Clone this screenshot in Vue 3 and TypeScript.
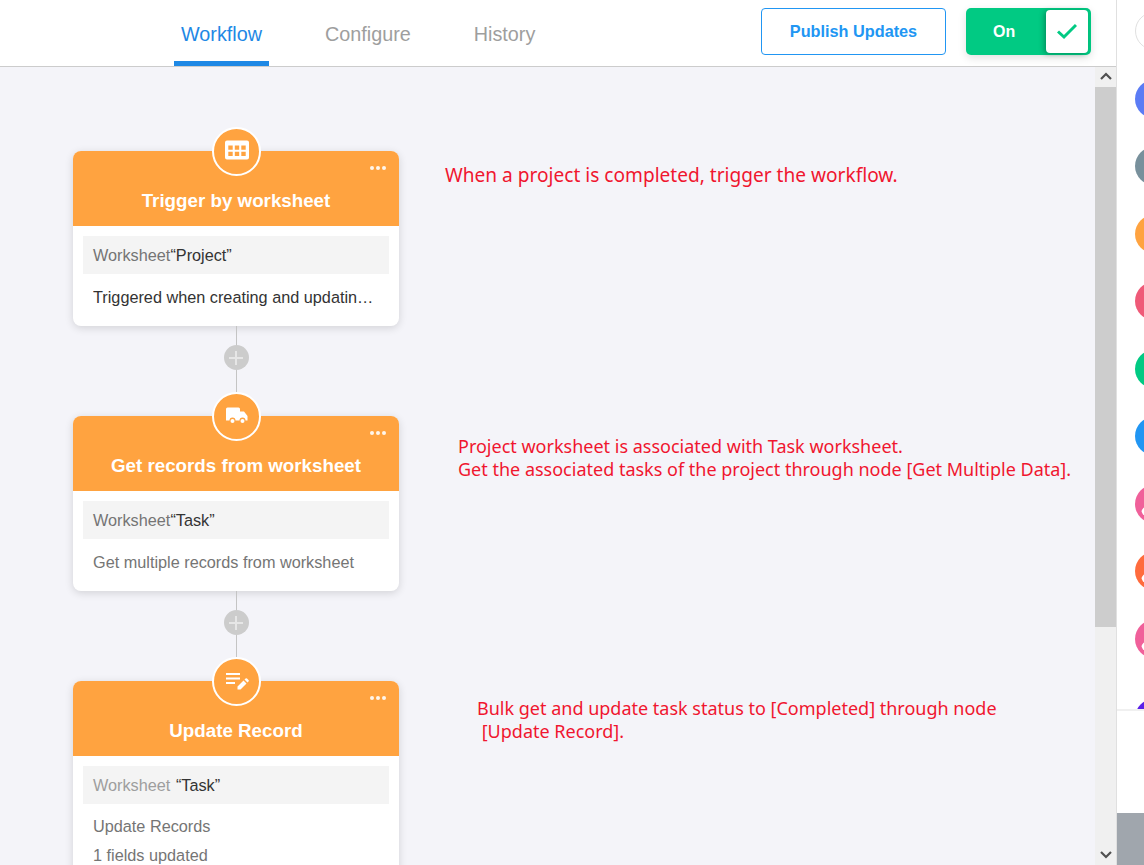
<script setup lang="ts">
interface FlowNode {
  title: string
  icon: 'table' | 'truck' | 'edit'
  label: string
  labelMuted?: boolean
  target: string
  lines: string[]
  dark?: boolean
  notes: string[]
  noteClass: string
}

const nodes: FlowNode[] = [
  {
    title: 'Trigger by worksheet',
    icon: 'table',
    label: 'Worksheet',
    target: '“Project”',
    lines: ['Triggered when creating and updating records'],
    dark: true,
    notes: ['When a project is completed, trigger the workflow.'],
    noteClass: 'note--first',
  },
  {
    title: 'Get records from worksheet',
    icon: 'truck',
    label: 'Worksheet',
    target: '“Task”',
    lines: ['Get multiple records from worksheet'],
    notes: [
      'Project worksheet is associated with Task worksheet.',
      'Get the associated tasks of the project through node [Get Multiple Data].',
    ],
    noteClass: 'note--second',
  },
  {
    title: 'Update Record',
    icon: 'edit',
    label: 'Worksheet ',
    labelMuted: true,
    target: '“Task”',
    lines: ['Update Records', '1 fields updated'],
    notes: [
      'Bulk get and update task status to [Completed] through node',
      '\u00a0[Update Record].',
    ],
    noteClass: 'note--third',
  },
]

const tabs = ['Workflow', 'Configure', 'History']
const apps = [
  { color: '#5b7cf5' },
  { color: '#78909c' },
  { color: '#ffa340' },
  { color: '#ef5a78' },
  { color: '#01ca83' },
  { color: '#2196f3' },
  { color: '#f0609a', glyph: true },
  { color: '#ff6b3d', glyph: true },
  { color: '#f0609a', glyph: true },
  { color: '#5a1fe8' },
]
</script>

<template>
  <div class="page">
    <main class="main">
      <header class="topbar">
        <nav class="tabs">
          <a
            v-for="(tab, idx) in tabs"
            :key="tab"
            class="tab"
            :class="{ 'tab--active': idx === 0 }"
          >{{ tab }}</a>
        </nav>
        <div class="actions">
          <button type="button" class="publish">Publish Updates</button>
          <div class="toggle">
            <span class="toggle-label">On</span>
            <span class="toggle-knob">
              <svg width="20" height="20" viewBox="0 0 20 20">
                <path d="M1 9.500l6 5.500L19 3" fill="none" stroke="#01ca83" stroke-width="3" />
              </svg>
            </span>
          </div>
        </div>
      </header>

      <div class="content">
        <div class="canvas">
          <template v-for="(node, idx) in nodes" :key="node.title">
            <section class="row">
              <article class="card">
                <div class="card-head">
                  <span class="badge">
                    <svg v-if="node.icon === 'table'" width="24" height="24" viewBox="0 2 24 24">
                      <path
                        fill="#fff"
                        fill-rule="evenodd"
                        d="M2 2.500h20A2 2 0 0 1 24 4.500v15a2 2 0 0 1-2 2H2a2 2 0 0 1-2-2v-15a2 2 0 0 1 2-2zM3.300 7.500v4.200h4.400V7.500zm6.500 0v4.200h4.400V7.500zm6.500 0v4.200h4.400V7.500zM3.300 13.800V18h4.400v-4.200zm6.500 0V18h4.400v-4.200zm6.500 0V18h4.400v-4.200z"
                      />
                    </svg>
                    <svg v-else-if="node.icon === 'truck'" width="24" height="24" viewBox="0 1.500 24 24">
                      <path
                        fill="#fff"
                        d="M2.500 4h11A1.500 1.500 0 0 1 15 5.500V8h4l3.500 4.500V17h-2a3 3 0 0 0-6 0h-4a3 3 0 0 0-6 0H1V5.500A1.500 1.500 0 0 1 2.500 4z"
                      />
                      <circle cx="7.500" cy="17.500" r="2" fill="#fff" />
                      <circle cx="17.500" cy="17.500" r="2" fill="#fff" />
                    </svg>
                    <svg v-else width="24" height="24" viewBox="0 0 24 24">
                      <path fill="#fff" d="M1 3h14v2H1zM1 7.500h14v2H1zM1 12h9v2H1z" />
                      <path fill="#fff" d="M12.500 16.500v3h3l6-6-3-3zM19.500 9.500l3 3 1-1a1 1 0 0 0 0-1.400L22 8.500a1 1 0 0 0-1.400 0z" />
                    </svg>
                  </span>
                  <span class="more"><i></i><i></i><i></i></span>
                  <h2 class="card-title">{{ node.title }}</h2>
                </div>
                <div class="card-body">
                  <div class="source">
                    <span :class="node.labelMuted ? 'source-label--muted' : 'source-label'">{{ node.label }}</span><span v-if="node.labelMuted" class="source-gap"></span><span class="source-target">{{ node.target }}</span>
                  </div>
                  <div class="desc" :class="{ 'desc--dark': node.dark, 'desc--tight': node.lines.length > 1 }">
                    <p v-for="line in node.lines" :key="line" class="desc-line">{{ line }}</p>
                  </div>
                </div>
              </article>
              <div class="note" :class="node.noteClass">
                <p v-for="line in node.notes" :key="line" class="note-line">{{ line }}</p>
              </div>
            </section>
            <div v-if="idx < nodes.length - 1" class="connector">
              <span class="add">
                <svg width="14" height="14" viewBox="0 0 14 14">
                  <path d="M7 0v14M0 7h14" stroke="#e6e6e6" stroke-width="2" />
                </svg>
              </span>
            </div>
          </template>
        </div>

        <div class="scrollbar">
          <span class="scroll-btn scroll-btn--up">
            <svg width="12" height="8" viewBox="0 0 12 8">
              <path d="M1 7l5-5 5 5" fill="none" stroke="#505050" stroke-width="2.200" />
            </svg>
          </span>
          <span class="scroll-thumb"></span>
          <span class="scroll-track"></span>
          <span class="scroll-btn">
            <svg width="12" height="8" viewBox="0 0 12 8">
              <path d="M1 1l5 5 5-5" fill="none" stroke="#505050" stroke-width="2.200" />
            </svg>
          </span>
        </div>
      </div>
    </main>

    <aside class="side">
      <div class="side-list">
        <span class="search"></span>
        <span
          v-for="(app, idx) in apps"
          :key="idx"
          class="app"
          :style="{ background: app.color }"
        >
          <i v-if="app.glyph" class="app-glyph"></i>
        </span>
      </div>
      <div class="side-blank"></div>
      <div class="side-foot"></div>
    </aside>
  </div>
</template>

<style>
html,
body {
  margin: 0;
  overflow: hidden;
}
</style>

<style scoped>
.page {
  display: flex;
  width: 1144px;
  height: 865px;
  overflow: hidden;
  background: #fff;
  font-family: 'Liberation Sans', Arial, sans-serif;
}

.main {
  display: flex;
  flex-direction: column;
  flex: 0 0 1116px;
  height: 100%;
}

.topbar {
  display: flex;
  flex: 0 0 67px;
  box-sizing: border-box;
  justify-content: space-between;
  background: #fff;
  border-bottom: 1px solid #ccc;
}

.tabs {
  display: flex;
  gap: 49px;
  padding-left: 174px;
}

.tab {
  box-sizing: border-box;
  height: 66px;
  padding: 23px 7px 0;
  border-bottom: 5px solid transparent;
  color: #9e9e9e;
  font-size: 19.800px;
  line-height: 23px;
}

.tab--active {
  color: #1e88e5;
  border-bottom-color: #1e88e5;
}

.actions {
  display: flex;
  gap: 20px;
  padding: 8px 25px 0 0;
}

.publish {
  box-sizing: border-box;
  width: 185px;
  height: 47px;
  border: 1px solid #2196f3;
  border-radius: 4px;
  background: #fff;
  color: #2196f3;
  font-family: inherit;
  font-size: 16.250px;
  font-weight: 700;
}

.toggle {
  display: flex;
  box-sizing: border-box;
  justify-content: space-between;
  width: 125px;
  height: 47px;
  padding: 2px 3px 2px 0;
  border-radius: 5px;
  background: #01ca83;
  box-shadow: 0 3px 8px rgba(0, 0, 0, 0.12);
}

.toggle-label {
  padding-left: 27px;
  color: #fff;
  font-size: 16px;
  font-weight: 700;
  line-height: 43px;
}

.toggle-knob {
  display: flex;
  align-items: center;
  justify-content: center;
  width: 42px;
  height: 43px;
  border-radius: 4px;
  background: #fff;
  box-shadow: -2px 1px 5px rgba(0, 80, 50, 0.45);
}

.content {
  display: flex;
  flex: 1;
  min-height: 0;
}

.canvas {
  flex: 1;
  min-width: 0;
  padding: 84px 0 0 73px;
  overflow: hidden;
  background: #f4f4f9;
}

.row {
  display: flex;
  align-items: flex-start;
}

.card {
  flex: 0 0 326px;
  width: 326px;
  min-width: 0;
  border-radius: 8px;
  background: #fff;
  box-shadow: 0 2px 8px rgba(0, 0, 0, 0.14);
}

.card-head {
  position: relative;
  box-sizing: border-box;
  height: 75px;
  padding-top: 37px;
  border-radius: 8px 8px 0 0;
  background: #ffa340;
}

.badge {
  position: absolute;
  top: -24px;
  left: 139px;
  display: flex;
  box-sizing: border-box;
  align-items: center;
  justify-content: center;
  width: 49px;
  height: 49px;
  border: 2px solid #fff;
  border-radius: 50%;
  background: #ffa340;
}

.more {
  position: absolute;
  top: 15px;
  right: 13px;
  display: flex;
  gap: 2px;
}

.more i {
  width: 4px;
  height: 4px;
  border-radius: 50%;
  background: #fff;
  opacity: 0.9;
}

.card-title {
  margin: 0;
  color: #fff;
  font-size: 18.750px;
  font-weight: 700;
  line-height: 26px;
  text-align: center;
}

.card-body {
  padding: 10px;
}

.source {
  box-sizing: border-box;
  height: 38px;
  padding: 1px 10px 0;
  background: #f4f4f4;
  font-size: 16.250px;
  line-height: 37px;
}

.source-label {
  color: #757575;
}

.source-label--muted {
  color: #9e9e9e;
}

.source-gap {
  display: inline-block;
  width: 1px;
}

.source-target {
  color: #333;
}

.desc {
  padding: 9px 12px 4px 10px;
  color: #757575;
  font-size: 16.250px;
  line-height: 29px;
}

.desc--dark {
  color: #333;
}

.desc--tight {
  padding-top: 8px;
}

.desc-line {
  margin: 0;
  overflow: hidden;
  text-overflow: ellipsis;
  white-space: nowrap;
}

.note {
  color: #f0162f;
  font-family: 'Noto Sans', 'Open Sans', sans-serif;
  font-size: 18px;
  line-height: 23px;
}

.note-line {
  margin: 0;
  white-space: nowrap;
}

.note--first {
  padding: 12.500px 0 0 46px;
  font-size: 19.100px;
}

.note--second {
  padding: 19px 0 0 59px;
}

.note--third {
  padding: 16px 0 0 78px;
}

.connector {
  position: relative;
  display: flex;
  align-items: flex-start;
  justify-content: center;
  width: 326px;
  height: 90px;
}

.connector::before {
  content: '';
  position: absolute;
  top: 0;
  bottom: 0;
  left: 163px;
  width: 1px;
  background: #c4c4c4;
}

.add {
  position: relative;
  display: flex;
  align-items: center;
  justify-content: center;
  width: 25px;
  height: 25px;
  margin-top: 19px;
  border-radius: 50%;
  background: #ccc;
}

.scrollbar {
  display: flex;
  flex: 0 0 21px;
  flex-direction: column;
  background: #f0f0f0;
}

.scroll-btn {
  display: flex;
  flex: 0 0 20px;
  align-items: center;
  justify-content: center;
}

.scroll-btn--up {
  padding-bottom: 2px;
  box-sizing: border-box;
}

.scroll-thumb {
  flex: 0 0 540px;
  background: #cdcdcd;
}

.scroll-track {
  flex: 1;
}

.side {
  display: flex;
  flex: 1;
  flex-direction: column;
  min-width: 0;
  border-left: 1px solid #e0e0e0;
  overflow: hidden;
  background: #fff;
}

.side-list {
  display: flex;
  box-sizing: border-box;
  flex: 0 0 711px;
  flex-direction: column;
  gap: 29.500px;
  padding: 12px 0 0 18px;
  overflow: hidden;
  border-bottom: 2px solid #f0f0f0;
}

.search,
.app {
  position: relative;
  flex: 0 0 38px;
  box-sizing: border-box;
  width: 38px;
  height: 38px;
  overflow: hidden;
  border-radius: 50%;
}

.search {
  border: 1px solid #e0e0e0;
}

.app:last-child {
  margin-top: 12px;
}

.app-glyph {
  position: absolute;
  top: 20px;
  left: 6px;
  width: 16px;
  height: 7px;
  border-radius: 50% 50% 0 0;
  background: #fff;
  transform: rotate(-25deg);
}

.side-blank {
  flex: 0 0 102px;
}

.side-foot {
  flex: 1;
  background: #a0a6ad;
}
</style>
